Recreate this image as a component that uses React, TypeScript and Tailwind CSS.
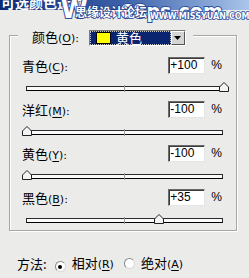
import React from "react";

type Row = { name: string; key: string; value: string; pos: number };

const rows: Row[] = [
  { name: "青色", key: "C", value: "+100", pos: 1 },
  { name: "洋红", key: "M", value: "-100", pos: 0 },
  { name: "黄色", key: "Y", value: "-100", pos: 0 },
  { name: "黑色", key: "B", value: "+35", pos: 0.675 },
];

const cjk = "font-['SimSun','Noto_Sans_CJK_SC',sans-serif]";

function Label({ name, k }: { name: string; k: string }) {
  return (
    <span className={`${cjk} text-[13px] leading-[16px] text-black`}>
      {name}
      <span className="font-['DejaVu_Sans',sans-serif] text-[11px]">
        (<span className="underline underline-offset-2">{k}</span>):
      </span>
    </span>
  );
}

function Slider({ pos }: { pos: number }) {
  return (
    <div className="relative ml-[16px] h-[10px] w-[197px]">
      {/* track */}
      <div className="absolute left-0 right-0 top-[4px] h-[5px] border border-[#2a2a2a] border-b-black bg-[#fafafa]" />
      <div className="absolute left-[98px] top-[3px] h-[7px] w-px bg-[#9a9a9a]" />
      {/* thumb */}
      <svg
        className="absolute top-0"
        style={{ left: `${pos * 197 - 4.5}px` }}
        width="10"
        height="10"
        viewBox="0 0 10 10"
      >
        <polygon points="0.5,9.5 0.5,5 5,0.5 9.5,5 9.5,9.5" fill="#f4f4f4" stroke="#222" strokeWidth="1" />
      </svg>
    </div>
  );
}

function Radio({ checked }: { checked?: boolean }) {
  return (
    <span className="relative inline-flex h-[11px] w-[11px] items-center justify-center rounded-full border border-t-[#8a8a8a] border-l-[#8a8a8a] border-r-[#d8d8d8] border-b-[#d8d8d8] bg-white">
      {checked && <span className="h-[4px] w-[4px] rounded-full bg-black" />}
    </span>
  );
}

export default function App() {
  return (
    <div className="relative h-[278px] w-[249px] overflow-hidden bg-[#ebebea]">
      {/* title bar */}
      <div className="relative h-[10px] overflow-hidden bg-gradient-to-r from-[#0c2a74] via-[#3f63aa] to-[#a9c5ea]">
        <div className={`${cjk} -mt-[6px] pl-[1px] text-[14px] font-bold leading-[16px] text-white`}>可选颜色选项</div>
      </div>

      {/* watermark overlay */}
      <div className="pointer-events-none absolute left-[61px] top-[-3px] font-['DejaVu_Sans',sans-serif] text-[24px] font-bold leading-[26px] text-white [-webkit-text-stroke:2px_#2b4ea0] [paint-order:stroke_fill]">
        W
      </div>
      <div className="pointer-events-none absolute left-[120px] top-[0px] font-['DejaVu_Sans',sans-serif] text-[19px] font-bold leading-[22px] text-white [-webkit-text-stroke:2px_#2b4ea0] [paint-order:stroke_fill]">
        68ps.com
      </div>
      <div className={`${cjk} pointer-events-none absolute left-[75px] top-[5px] text-[12px] font-bold leading-[14px] text-white [-webkit-text-stroke:1.5px_#1d3a86] [paint-order:stroke_fill]`}>
        思缘设计论坛
      </div>
      <div className="pointer-events-none absolute left-[150px] top-[12px] font-['DejaVu_Sans',sans-serif] text-[8px] font-bold leading-[9px] text-white [-webkit-text-stroke:1.5px_#2b4ea0] [paint-order:stroke_fill]">
        WWW.MISSYUAN.COM
      </div>

      {/* group box */}
      <div className="relative ml-[9px] mt-[25px] h-[196px] w-[228px] border border-[#a7a7a7] shadow-[inset_1px_1px_0_#ffffff,1px_1px_0_#ffffff]">
        <div className="absolute left-[8px] top-[-7px] flex items-center gap-[10px] bg-[#ebebea] pl-[14px] pr-[7px]">
          <Label name="颜色" k="O" />
          {/* dropdown */}
          <div className="flex h-[16px] w-[97px] border border-t-[#7a7a7a] border-l-[#7a7a7a] border-r-white border-b-white">
            <div className="flex flex-1 items-center border border-dotted border-[#c8c8c8] bg-[#0b2470] pl-[5px]">
              <div className="h-[12px] w-[15px] border border-black bg-[#ffff00]" />
              <span className={`${cjk} ml-[5px] text-[13px] leading-[14px] text-white`}>黄色</span>
            </div>
            <div className="flex w-[14px] items-center justify-center border border-t-white border-l-white border-r-[#555] border-b-[#555] bg-[#d4d4d4]">
              <svg width="7" height="4" viewBox="0 0 7 4">
                <polygon points="0,0 7,0 3.5,4" fill="#000" />
              </svg>
            </div>
          </div>
        </div>

        <div className="flex flex-col pt-[21px]">
          {rows.map((r) => (
            <div key={r.key} className="flex h-[44px] flex-col">
              <div className="flex h-[16px] items-center pl-[12px]">
                <div className="flex-1">
                  <Label name={r.name} k={r.key} />
                </div>
                <div className="flex h-[17px] w-[37px] items-center border border-t-[#6a6a6a] border-l-[#6a6a6a] border-r-[#e4e4e4] border-b-[#e4e4e4] bg-white pl-[1px] shadow-[inset_1px_1px_0_#3c3c3c] font-['Liberation_Sans',sans-serif] text-[12px] text-black">
                  {r.value}
                </div>
                <span className="ml-[6px] mr-[14px] font-['Liberation_Sans',sans-serif] text-[12px] text-black">%</span>
              </div>
              <div className="mt-[9px]">
                <Slider pos={r.pos} />
              </div>
            </div>
          ))}
        </div>
      </div>

      {/* method */}
      <div className={`${cjk} mt-[24px] flex items-center pl-[17px] text-[13px] leading-[16px] text-black`}>
        <span>方法:</span>
        <span className="ml-[8px]"><Radio checked /></span>
        <span className="ml-[6px]">
          相对<span className="font-['DejaVu_Sans',sans-serif] text-[11px]">(<span className="underline underline-offset-2">R</span>)</span>
        </span>
        <span className="ml-[10px]"><Radio /></span>
        <span className="ml-[6px]">
          绝对<span className="font-['DejaVu_Sans',sans-serif] text-[11px]">(<span className="underline underline-offset-2">A</span>)</span>
        </span>
      </div>
    </div>
  );
}
